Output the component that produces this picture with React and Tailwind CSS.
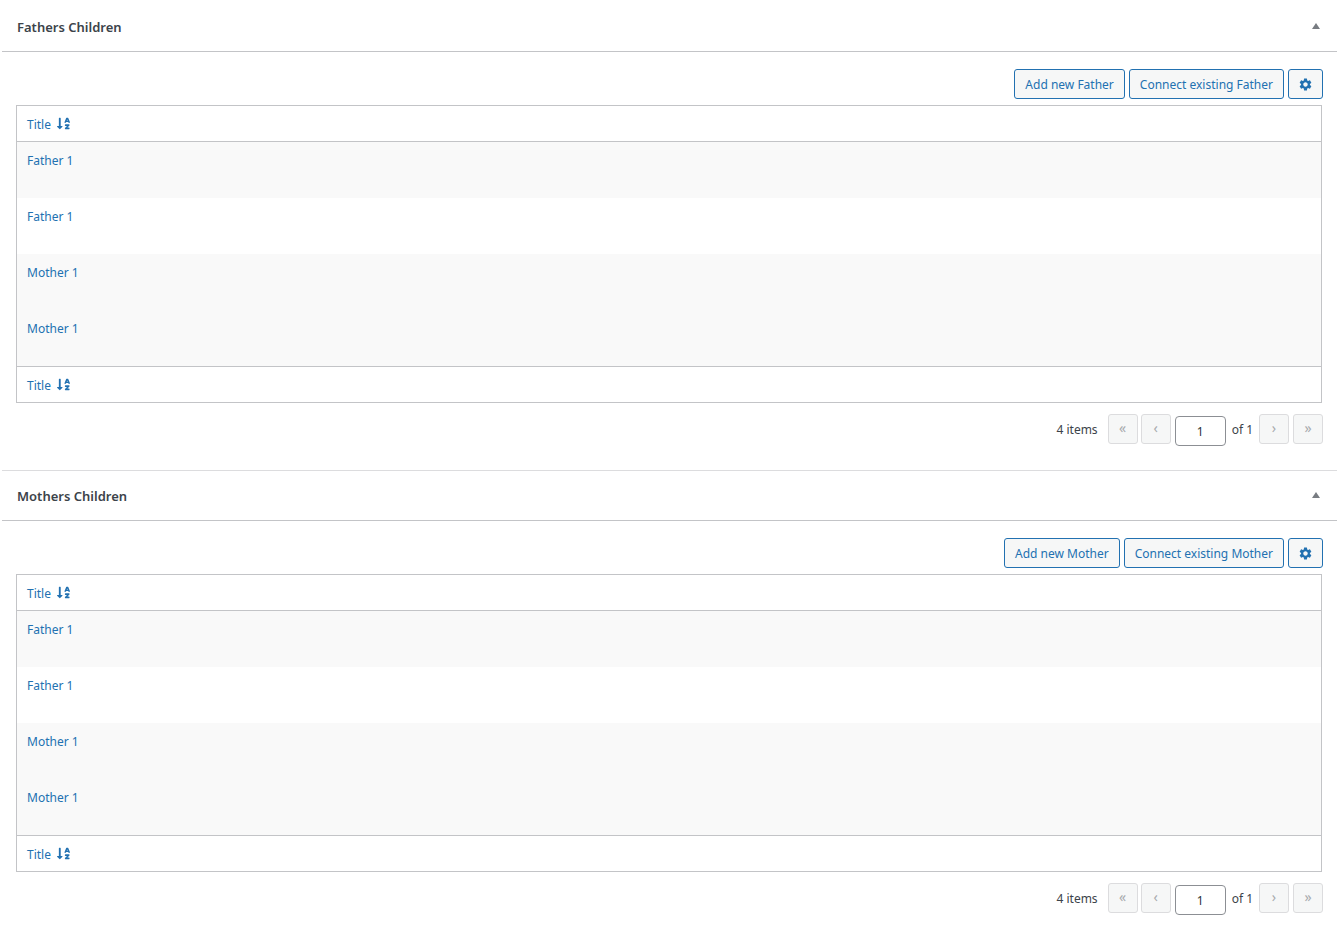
import React from "react";
import { FaSortAlphaDown } from "react-icons/fa";
import { MdSettings } from "react-icons/md";

const rows = [
  { name: "Father 1", shaded: true },
  { name: "Father 1", shaded: false },
  { name: "Mother 1", shaded: true },
  { name: "Mother 1", shaded: true },
];

function ActionButton({ children, label }) {
  return (
    <button
      type="button"
      aria-label={label}
      className="flex h-[30px] items-center justify-center whitespace-nowrap rounded-[3px] border border-[#2271b1] bg-[#f6f7f7] px-2.5 text-[#2271b1]"
    >
      {children}
    </button>
  );
}

function PageButton({ children, label }) {
  return (
    <button
      type="button"
      disabled
      aria-label={label}
      className="flex size-[30px] items-center justify-center rounded-[3px] border border-[#dcdcde] bg-[#f6f7f7] pb-0.5 text-sm text-[#a7aaad]"
    >
      {children}
    </button>
  );
}

function SortLink() {
  return (
    <a href="#sort" className="inline-flex items-center gap-1.5 text-[#2271b1]">
      <span className="pt-0.5">Title</span>
      <FaSortAlphaDown
        className="size-[13px]"
        preserveAspectRatio="none"
        aria-hidden="true"
      />
    </a>
  );
}

function RelationTable() {
  return (
    <table className="w-full border-collapse border border-[#c3c4c7] text-left">
      <thead>
        <tr className="h-9 border-b border-[#c3c4c7]">
          <th scope="col" className="px-2.5 py-0 align-middle font-normal">
            <SortLink />
          </th>
        </tr>
      </thead>
      <tbody>
        {rows.map((row, i) => (
          <tr
            key={i}
            className={
              row.shaded ? "h-14 bg-[#f9f9f9] last:h-[57px]" : "h-14 bg-white last:h-[57px]"
            }
          >
            <td className="px-2.5 pt-2.5 align-top">
              <a href="#edit" className="text-[#2271b1]">
                {row.name}
              </a>
            </td>
          </tr>
        ))}
      </tbody>
      <tfoot>
        <tr className="h-9 border-t border-[#c3c4c7]">
          <th scope="col" className="px-2.5 py-0 align-middle font-normal">
            <SortLink />
          </th>
        </tr>
      </tfoot>
    </table>
  );
}

function Pagination() {
  return (
    <nav aria-label="Pagination" className="flex items-center justify-end pt-[11px]">
      <span className="mr-2.5 pt-0.5">4 items</span>
      <div className="flex gap-[3px]">
        <PageButton label="First page">«</PageButton>
        <PageButton label="Previous page">‹</PageButton>
      </div>
      <input
        type="text"
        aria-label="Current page"
        defaultValue="1"
        className="ml-1 mt-0.5 -mb-0.5 h-[30px] w-[51px] rounded border border-[#8c8f94] bg-white text-center text-[#2c3338]"
      />
      <span className="mx-1.5 pt-0.5">of 1</span>
      <div className="flex gap-1">
        <PageButton label="Next page">›</PageButton>
        <PageButton label="Last page">»</PageButton>
      </div>
    </nav>
  );
}

function Panel({ title, type }) {
  return (
    <section className="border-t border-[#dcdcde] first:border-white">
      <header className="flex h-[50px] items-center justify-between border-b border-[#c3c4c7] pl-[15px] pr-[17px]">
        <h2 className="text-[13px] font-semibold text-[#3c434a]">{title}</h2>
        <button type="button" aria-label={"Toggle panel: " + title} className="pb-0.5 text-[#787c82]">
          <svg viewBox="0 0 8 6" className="h-1.5 w-2 fill-current" aria-hidden="true">
            <path d="M4 0 8 6H0Z" />
          </svg>
        </button>
      </header>
      <div className="pb-[26px] pl-3.5 pr-[15px] pt-[17px]">
        <div className="-mr-px mb-1.5 flex justify-end gap-1">
          <ActionButton>
            <span className="pt-0.5">Add new {type}</span>
          </ActionButton>
          <ActionButton>
            <span className="pt-0.5">Connect existing {type}</span>
          </ActionButton>
          <ActionButton label="Settings">
            <MdSettings viewBox="1.5 1.5 21 21" className="size-[13px]" aria-hidden="true" />
          </ActionButton>
        </div>
        <RelationTable />
        <div className="-mr-px">
          <Pagination />
        </div>
      </div>
    </section>
  );
}

export default function App() {
  return (
    <main className="min-h-screen bg-white pl-0.5 pr-1.5 pt-px font-['Noto_Sans',sans-serif] text-xs leading-[18px] text-[#3c434a]">
      <Panel title="Fathers Children" type="Father" />
      <Panel title="Mothers Children" type="Mother" />
    </main>
  );
}
